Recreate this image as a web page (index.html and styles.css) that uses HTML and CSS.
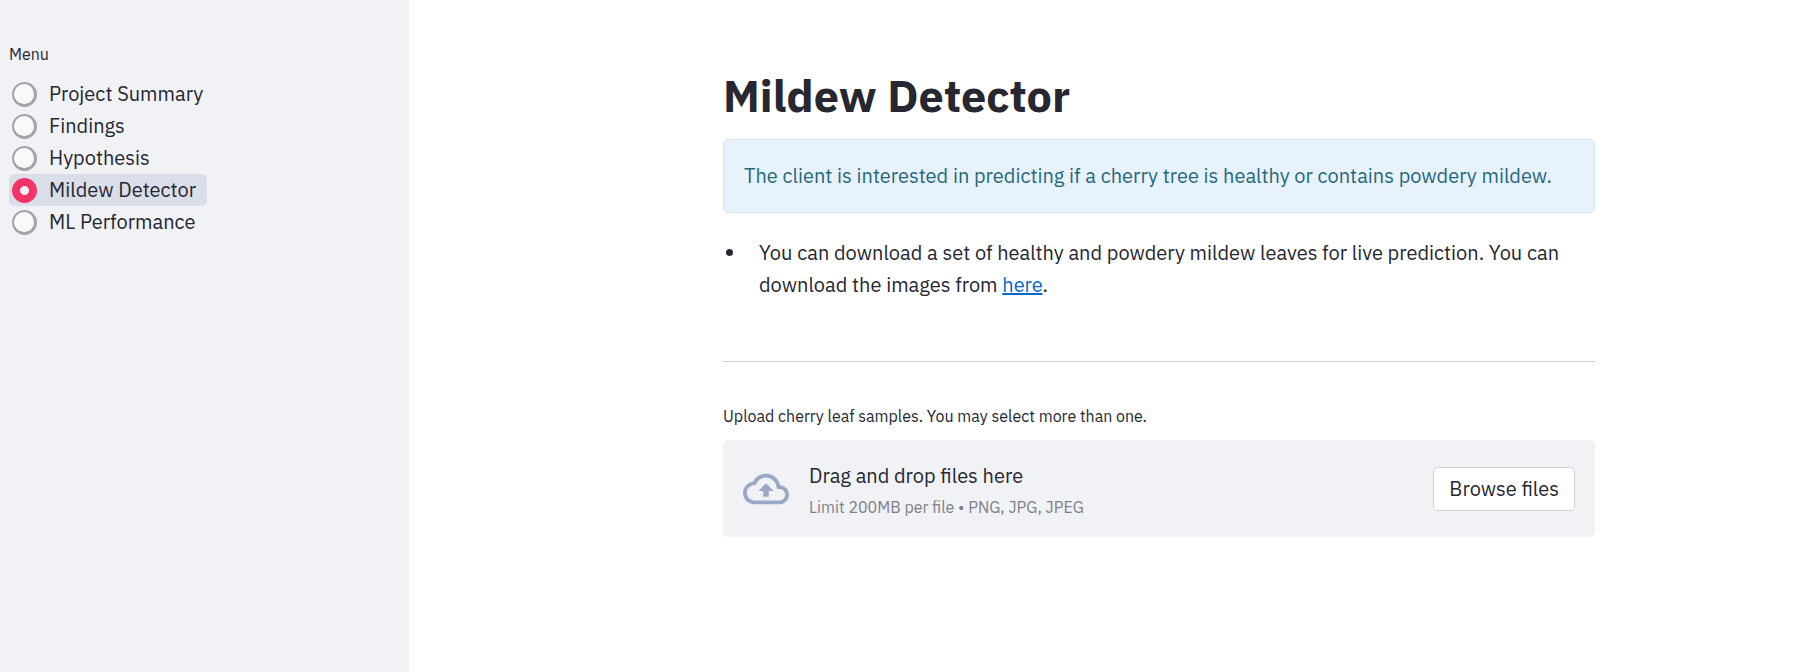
FILE: index.html
```
<!DOCTYPE html>
<html lang="en">
<head>
<meta charset="utf-8">
<meta name="viewport" content="width=device-width, initial-scale=1">
<title>Mildew Detector</title>
<link rel="stylesheet" href="styles.css">
</head>
<body>
<div class="app">
  <aside class="sidebar">
    <fieldset class="menu">
      <legend class="menu-title">Menu</legend>
      <label class="menu-item"><input class="radio" type="radio" name="page"><span>Project Summary</span></label>
      <label class="menu-item"><input class="radio" type="radio" name="page"><span>Findings</span></label>
      <label class="menu-item"><input class="radio" type="radio" name="page"><span>Hypothesis</span></label>
      <label class="menu-item"><input class="radio" type="radio" name="page" checked><span>Mildew Detector</span></label>
      <label class="menu-item"><input class="radio" type="radio" name="page"><span>ML Performance</span></label>
    </fieldset>
  </aside>
  <main class="main">
    <div class="content">
      <h1 class="title">Mildew Detector</h1>
      <div class="alert">The client is interested in predicting if a cherry tree is healthy or contains powdery mildew.</div>
      <ul class="notes">
        <li>You can download a set of healthy and powdery mildew leaves for live prediction. You can download the images from <a class="link" href="#">here</a>.</li>
      </ul>
      <hr class="divider">
      <section class="uploader">
        <p class="uploader-label" id="upload-label">Upload cherry leaf samples. You may select more than one.</p>
        <div class="dropzone" role="group" aria-labelledby="upload-label">
          <svg class="cloud" viewBox="0 0 24 24" fill="currentColor" aria-hidden="true"><path d="M19.35 10.04A7.49 7.49 0 0 0 12 4C9.11 4 6.6 5.64 5.35 8.04A5.994 5.994 0 0 0 0 14c0 3.31 2.69 6 6 6h13c2.76 0 5-2.24 5-5 0-2.64-2.05-4.78-4.65-4.96zM19 18H6c-2.21 0-4-1.79-4-4 0-2.05 1.53-3.76 3.56-3.97l1.07-.11.5-.95A5.469 5.469 0 0 1 12 6c2.62 0 4.88 1.86 5.39 4.43l.3 1.5 1.53.11A2.98 2.98 0 0 1 22 15c0 1.65-1.35 3-3 3zM8 13h2.55v3h2.9v-3H16l-4-4z"/></svg>
          <div class="drop-text">
            <span class="drop-title">Drag and drop files here</span>
            <small class="drop-hint">Limit 200MB per file • PNG, JPG, JPEG</small>
          </div>
          <button class="browse" type="button">Browse files</button>
        </div>
      </section>
    </div>
  </main>
</div>
</body>
</html>
```
FILE: styles.css
```
* { box-sizing: border-box; }

body {
  margin: 0;
  background: #fff;
  color: #262730;
  font-family: "IBM Plex Sans", "Noto Sans", sans-serif;
  font-size: 20px;
  line-height: 32px;
}

.app {
  display: flex;
  min-height: 100vh;
}

.sidebar {
  flex: 0 0 409px;
  padding: 42px 9px;
  background: #f0f2f6;
}

.menu {
  display: flex;
  flex-direction: column;
  align-items: flex-start;
  margin: 0;
  padding: 0;
  border: 0;
}

.menu-title {
  padding: 0;
  margin-bottom: 12px;
  font-size: 16px;
  line-height: 24px;
}

.menu-item {
  display: flex;
  align-items: center;
  gap: 12px;
  padding: 0 11px 0 3px;
  border-radius: 5px;
}

.menu-item:has(:checked) { background: #dadee9; }

.radio {
  appearance: none;
  width: 25px;
  height: 25px;
  margin: 0;
  border: solid #a3a4a9;
  border-width: 2px 3px 3px 2px;
  border-radius: 50%;
  background: #fafafc;
}

.radio:checked {
  border: 0;
  background: radial-gradient(circle, #f0f2f6 4px, #f63366 5px);
}

.main {
  flex: 1;
  display: flex;
  justify-content: center;
  padding: 67px 0 40px 103px;
}

.content {
  width: 100%;
  max-width: 872px;
}

.title {
  margin: 0 0 16px;
  font-size: 45px;
  line-height: 56px;
  font-weight: 700;
}

.alert {
  padding: 20px;
  border: 1px solid #d0e6fb;
  border-radius: 5px;
  background: #e8f2fc;
  color: #25697b;
}

.notes {
  margin: 24px 0 0;
  padding-left: 24px;
}

.notes li { padding-left: 12px; }

.link {
  color: #0068c9;
  text-decoration-thickness: 2px;
}

.divider {
  margin: 60px 0 40px;
  border: 0;
  border-top: 1px solid #d0d1d4;
}

.uploader-label {
  margin: 0 0 10px;
  font-size: 16px;
  line-height: 28px;
}

.dropzone {
  display: flex;
  align-items: center;
  gap: 20px;
  padding: 20px;
  border-radius: 5px;
  background: #f0f2f6;
}

.cloud {
  width: 46px;
  height: 46px;
  color: #9aa8c7;
}

.drop-text {
  flex: 1;
  display: flex;
  flex-direction: column;
  gap: 5px;
}

.drop-hint {
  font-size: 16px;
  line-height: 20px;
  color: #7e7f88;
}

.browse {
  padding: 5px 15px;
  border: 1px solid #d0d1d4;
  border-radius: 5px;
  background: #fff;
  color: inherit;
  font: inherit;
}
```
